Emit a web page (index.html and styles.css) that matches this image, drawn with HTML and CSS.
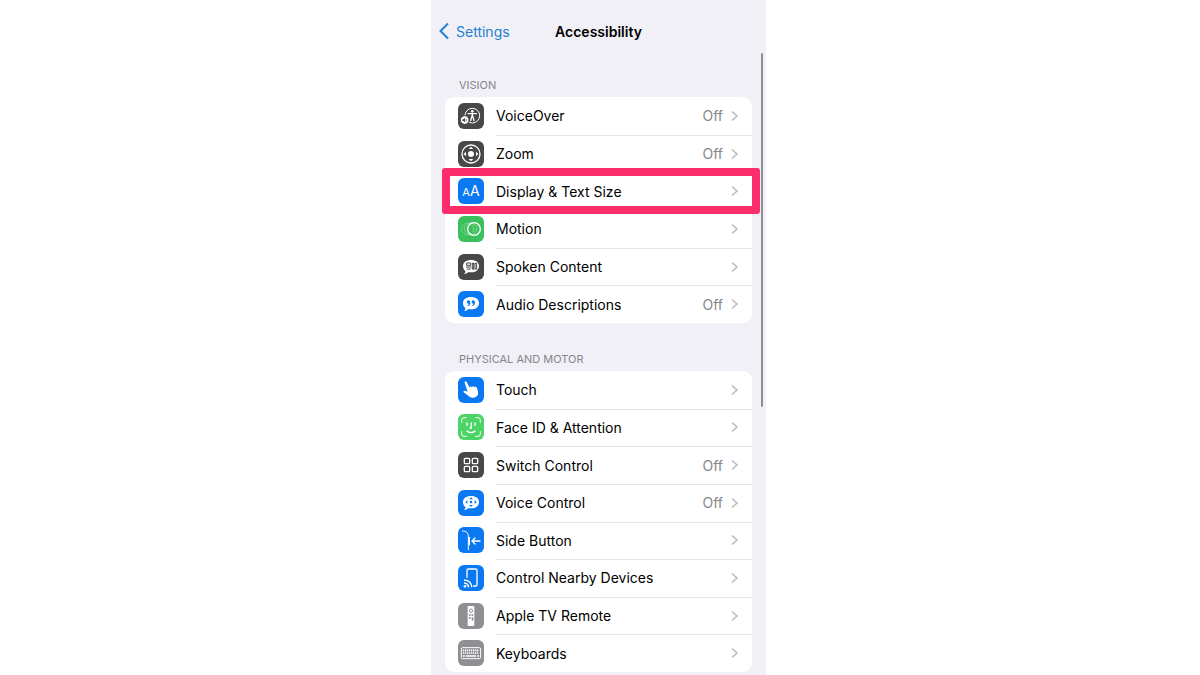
FILE: index.html
```
<!DOCTYPE html>
<html lang="en">
<head>
    <meta charset="UTF-8">
    <meta name="viewport" content="width=device-width, initial-scale=1.0">
    <title>Accessibility</title>
    <link rel="stylesheet" href="styles.css">
</head>
<body>
    <!-- Shared shapes -->
    <svg class="defs" aria-hidden="true">
        <symbol id="chevron" viewBox="0 0 8 12">
            <path d="M1 1.5 L6 6 L1 10.5" fill="none" stroke="currentColor" stroke-width="1.6"/>
        </symbol>
        <symbol id="bubble" viewBox="0 0 78 78">
            <path d="M39 18 C53 18 63 25 63 36 C63 48 53 55 39 55 C37 55 34 55 32 54 C28 58 23 60 18 60 C21 57 23 54 22 51 C17 47 15 42 15 36 C15 25 25 18 39 18 Z" fill="#fff"/>
        </symbol>
    </svg>

    <main class="phone">
        <!-- Top bar -->
        <header class="navbar">
            <a class="back" href="#">
                <svg class="back-icon" viewBox="0 0 12 18"><path d="M10 1.5 L2.5 9 L10 16.5" fill="none" stroke="currentColor" stroke-width="2"/></svg>
                Settings
            </a>
            <h1>Accessibility</h1>
        </header>

        <!-- Vision -->
        <section>
            <h2>VISION</h2>
            <ul class="list vision">
                <li><a class="row" href="#">
                    <svg class="icon dark" viewBox="0 0 78 78">
                        <circle cx="43" cy="38" r="22" fill="none" stroke="#fff" stroke-width="3"/>
                        <circle cx="43" cy="25" r="4" fill="#fff"/>
                        <path d="M31 32 H55 M43 32 V41 M42 39 L38 53 M44 39 L48 53" fill="none" stroke="#fff" stroke-width="4" stroke-linecap="round"/>
                        <circle cx="20" cy="51" r="13" fill="#fff" stroke="#48484a" stroke-width="3"/>
                        <path d="M13 49 H16 L21 45 V58 L16 54 H13 Z" fill="#48484a"/>
                        <path d="M24 47 Q27 51 24 55" fill="none" stroke="#48484a" stroke-width="2"/>
                    </svg>
                    <span class="label">VoiceOver</span>
                    <span class="value">Off</span>
                    <svg class="chevron"><use href="#chevron"/></svg>
                </a></li>
                <li><a class="row" href="#">
                    <svg class="icon dark" viewBox="0 0 78 78">
                        <circle cx="39" cy="39" r="27" fill="none" stroke="#fff" stroke-width="4"/>
                        <circle cx="39" cy="39" r="9" fill="#fff"/>
                        <path d="M39 17 L46 24 H32 Z M39 61 L46 54 H32 Z M17 39 L24 32 V46 Z M61 39 L54 32 V46 Z" fill="#fff"/>
                    </svg>
                    <span class="label">Zoom</span>
                    <span class="value">Off</span>
                    <svg class="chevron"><use href="#chevron"/></svg>
                </a></li>
                <li class="highlight"><a class="row" href="#">
                    <span class="icon blue letters" aria-hidden="true"><small>A</small>A</span>
                    <span class="label">Display &amp; Text Size</span>
                    <svg class="chevron"><use href="#chevron"/></svg>
                </a></li>
                <li><a class="row" href="#">
                    <svg class="icon green" viewBox="0 0 78 78">
                        <g fill="none" stroke="#fff">
                            <circle cx="29" cy="39" r="18" stroke-width="3" stroke-dasharray="2 4" opacity="0.8"/>
                            <circle cx="38" cy="39" r="18" stroke-width="2" opacity="0.5"/>
                            <circle cx="48" cy="39" r="19" stroke-width="4"/>
                        </g>
                    </svg>
                    <span class="label">Motion</span>
                    <svg class="chevron"><use href="#chevron"/></svg>
                </a></li>
                <li><a class="row" href="#">
                    <svg class="icon dark" viewBox="0 0 78 78">
                        <use href="#bubble"/>
                        <g fill="none" stroke="#48484a" stroke-width="3">
                            <path d="M26 27 H38 V34 H26 Z M24 39 H40 M26 45 H38"/>
                            <rect x="43" y="28" width="4" height="17"/>
                            <rect x="51" y="28" width="5" height="17"/>
                        </g>
                    </svg>
                    <span class="label">Spoken Content</span>
                    <svg class="chevron"><use href="#chevron"/></svg>
                </a></li>
                <li><a class="row" href="#">
                    <svg class="icon blue" viewBox="0 0 78 78">
                        <use href="#bubble"/>
                        <g fill="#0a78f0">
                            <path d="M37 35 C37 40 34 44 29 45 L28 43 C31 42 32 40 32 38 C29 38 27 36 27 33 C27 30 29 28 32 28 C35 28 37 31 37 35 Z"/>
                            <path d="M51 35 C51 40 48 44 43 45 L42 43 C45 42 46 40 46 38 C43 38 41 36 41 33 C41 30 43 28 46 28 C49 28 51 31 51 35 Z"/>
                        </g>
                    </svg>
                    <span class="label">Audio Descriptions</span>
                    <span class="value">Off</span>
                    <svg class="chevron"><use href="#chevron"/></svg>
                </a></li>
            </ul>
        </section>

        <!-- Physical and Motor -->
        <section>
            <h2>PHYSICAL AND MOTOR</h2>
            <ul class="list motor">
                <li><a class="row" href="#">
                    <svg class="icon blue" viewBox="0 0 78 78">
                        <path d="M20 17 C19 13 24 11 26 15 L35 32 C35 28 40 27 42 31 C43 27 48 27 50 31 C52 28 56 29 57 33 L60 45 C62 55 55 61 47 62 C39 63 34 60 29 55 L17 46 C15 42 19 40 23 42 L29 44 Z" fill="#fff"/>
                    </svg>
                    <span class="label">Touch</span>
                    <svg class="chevron"><use href="#chevron"/></svg>
                </a></li>
                <li><a class="row" href="#">
                    <svg class="icon lime" viewBox="0 0 78 78">
                        <g fill="none" stroke="#fff" stroke-width="3" stroke-linecap="round">
                            <path d="M11 25 V18 Q11 11 18 11 H25 M53 11 H60 Q67 11 67 18 V25 M67 53 V60 Q67 67 60 67 H53 M25 67 H18 Q11 67 11 60 V53"/>
                            <path d="M27 27 V34 M51 27 V34 M40 27 V42 H36 M27 51 Q39 61 51 51" stroke-width="4"/>
                        </g>
                    </svg>
                    <span class="label">Face ID &amp; Attention</span>
                    <svg class="chevron"><use href="#chevron"/></svg>
                </a></li>
                <li><a class="row" href="#">
                    <svg class="icon dark" viewBox="0 0 78 78">
                        <g fill="none" stroke="#fff" stroke-width="4">
                            <rect x="19" y="19" width="16" height="16" rx="3"/>
                            <rect x="43" y="19" width="16" height="16" rx="3"/>
                            <rect x="19" y="43" width="16" height="16" rx="3"/>
                            <rect x="43" y="43" width="16" height="16" rx="3"/>
                        </g>
                    </svg>
                    <span class="label">Switch Control</span>
                    <span class="value">Off</span>
                    <svg class="chevron"><use href="#chevron"/></svg>
                </a></li>
                <li><a class="row" href="#">
                    <svg class="icon blue" viewBox="0 0 78 78">
                        <use href="#bubble"/>
                        <path d="M39 22 L45 28 H33 Z M39 51 L45 45 H33 Z M22 36 L28 30 V42 Z M56 36 L50 30 V42 Z" fill="#0a78f0"/>
                        <circle cx="39" cy="36" r="4" fill="#0a78f0"/>
                    </svg>
                    <span class="label">Voice Control</span>
                    <span class="value">Off</span>
                    <svg class="chevron"><use href="#chevron"/></svg>
                </a></li>
                <li><a class="row" href="#">
                    <svg class="icon blue" viewBox="0 0 78 78">
                        <g fill="none" stroke="#fff" stroke-width="3" stroke-linecap="round">
                            <path d="M13 12 C25 12 31 17 31 29 V68"/>
                            <path d="M34 31 V53" stroke-width="4"/>
                            <path d="M66 42 H43 M51 33 L42 42 L51 51" stroke-width="4"/>
                        </g>
                    </svg>
                    <span class="label">Side Button</span>
                    <svg class="chevron"><use href="#chevron"/></svg>
                </a></li>
                <li><a class="row" href="#">
                    <svg class="icon blue" viewBox="0 0 78 78">
                        <g fill="none" stroke="#fff" stroke-width="4">
                            <path d="M27 38 V16 Q27 12 31 12 H53 Q57 12 57 16 V59 Q57 63 53 63 H45"/>
                            <path d="M18 45 Q40 46 41 67 M18 54 Q31 55 32 67"/>
                        </g>
                        <circle cx="21" cy="64" r="4" fill="#fff"/>
                    </svg>
                    <span class="label">Control Nearby Devices</span>
                    <svg class="chevron"><use href="#chevron"/></svg>
                </a></li>
                <li><a class="row" href="#">
                    <svg class="icon gray" viewBox="0 0 78 78">
                        <rect x="29" y="9" width="20" height="60" rx="3" fill="#fff"/>
                        <circle cx="39" cy="23" r="5" fill="none" stroke="#8e8e93" stroke-width="3"/>
                        <g fill="#8e8e93">
                            <circle cx="35" cy="36" r="3"/>
                            <circle cx="43" cy="36" r="3"/>
                            <circle cx="35" cy="45" r="3"/>
                            <rect x="41" y="42" width="5" height="11" rx="2"/>
                        </g>
                    </svg>
                    <span class="label">Apple TV Remote</span>
                    <svg class="chevron"><use href="#chevron"/></svg>
                </a></li>
                <li><a class="row" href="#">
                    <svg class="icon gray" viewBox="0 0 78 78">
                        <rect x="10" y="23" width="58" height="33" rx="4" fill="none" stroke="#fff" stroke-width="3"/>
                        <g fill="none" stroke="#fff" stroke-width="5">
                            <path d="M15 31 H63 M15 39 H63" stroke-dasharray="4 2"/>
                            <path d="M15 48 H21 M24 48 H54 M57 48 H63"/>
                        </g>
                    </svg>
                    <span class="label">Keyboards</span>
                    <svg class="chevron"><use href="#chevron"/></svg>
                </a></li>
            </ul>
        </section>

        <div class="scroll-thumb"></div>
    </main>
</body>
</html>
```
FILE: styles.css
```
* {
    box-sizing: border-box;
}
body {
    margin: 0;
    padding-right: 3px;
    background-color: #fff;
    font-family: Inter, "Liberation Sans", sans-serif;
    font-size: 14px;
    color: #000;
}
a {
    color: inherit;
    text-decoration: none;
}
.defs {
    display: none;
}
.phone {
    position: relative;
    max-width: 335px;
    min-height: 100vh;
    margin: 0 auto;
    background-color: #f1f0f6;
}

/* Top bar */
.navbar {
    display: grid;
    grid-template-columns: 1fr auto 1fr;
    align-items: center;
    height: 62px;
    padding: 0 7px;
}
.back {
    display: flex;
    align-items: center;
    gap: 6px;
    color: #2480d0;
}
.back-icon {
    width: 12px;
    height: 18px;
}
h1 {
    margin: 0;
    font-size: 14px;
    font-weight: 600;
}

/* Groups */
h2 {
    margin: 0;
    padding: 15px 28px 4px;
    font-size: 11px;
    line-height: 16px;
    font-weight: 400;
    color: #85858b;
}
.list {
    display: flex;
    flex-direction: column;
    margin: 0 14px;
    padding: 0;
    list-style: none;
    background-color: #fff;
    border-radius: 9px;
}
.vision {
    min-height: 226px;
    margin-bottom: 13px;
}
.motor {
    min-height: 301px;
}
.list li {
    position: relative;
    display: flex;
    flex: 1;
}
.row {
    display: flex;
    flex: 1;
    align-items: center;
    padding: 0 13px;
}
.list li + li::before {
    content: "";
    position: absolute;
    top: 0;
    left: 51px;
    right: 0;
    height: 1px;
    background-color: #e6e6e9;
}
.label {
    flex: 1;
    margin-left: 12px;
}
.value {
    margin-right: 8px;
    color: #85858b;
}
.chevron {
    width: 8px;
    height: 12px;
    color: #bcbcc0;
}

/* Icons */
.icon {
    width: 26px;
    height: 26px;
    border-radius: 6px;
}
.dark {
    background-color: #48484a;
}
.blue {
    background-color: #0a78f0;
}
.green {
    background-color: #3bc05c;
}
.lime {
    background-color: #4cd466;
}
.gray {
    background-color: #8e8e93;
}
.letters {
    display: flex;
    align-items: baseline;
    justify-content: center;
    line-height: 26px;
    color: #fff;
}
.letters small {
    font-size: 11px;
}

/* Marked row */
.highlight::after {
    content: "";
    position: absolute;
    z-index: 1;
    top: -4px;
    bottom: -4px;
    left: -3px;
    right: -8px;
    border: 8px solid #fb2e6b;
    border-radius: 3px;
    pointer-events: none;
}

.scroll-thumb {
    position: absolute;
    z-index: 2;
    top: 53px;
    right: 3px;
    width: 2px;
    height: 354px;
    border-radius: 2px;
    background-color: #8f8e96;
}
```
